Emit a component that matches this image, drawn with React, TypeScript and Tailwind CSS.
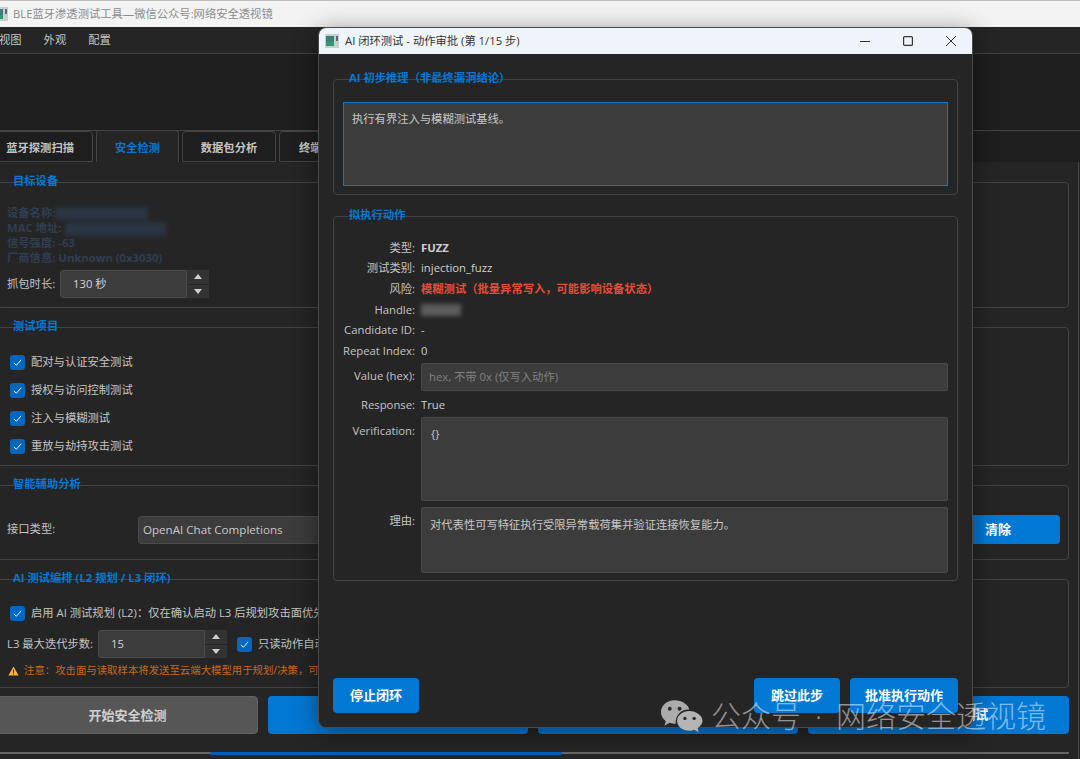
import type { ReactNode } from "react";

const FONT = "font-[family-name:'Open_Sans','Noto_Sans_CJK_SC',sans-serif]";

function AppIcon() {
  return (
    <svg viewBox="0 0 14 14" className="w-[14px] h-[14px] shrink-0" aria-hidden="true">
      <rect x="0" y="0" width="14" height="14" fill="#c9ced1" />
      <rect x="1" y="2" width="8" height="10" fill="#3b7f78" />
      <rect x="1" y="8" width="8" height="4" fill="#2f9a6d" />
      <rect x="11" y="2" width="2" height="5" fill="#5c6770" />
    </svg>
  );
}

function GroupBox({
  title,
  className,
  children,
}: {
  title: string;
  className: string;
  children: ReactNode;
}) {
  return (
    <section className={`relative shrink-0 rounded-[4px] border border-[#444444] ${className}`}>
      {/* Legend sits on the border, the line runs through it */}
      <div className="absolute left-[15px] top-[-12px] text-[11.3px] leading-[20px] font-bold text-[#0078d4] whitespace-nowrap">
        {title}
      </div>
      {children}
    </section>
  );
}

function Check({ label }: { label: string }) {
  return (
    <label className="flex items-center gap-[6px] whitespace-nowrap">
      <span className="flex h-[15px] w-[15px] shrink-0 items-center justify-center rounded-[3px] bg-[#0067c0]">
        <svg viewBox="0 0 12 12" className="h-[11px] w-[11px]" fill="none" stroke="#ffffff" strokeWidth="1">
          <path d="M2 6.5 L4.8 9 L10 3" />
        </svg>
      </span>
      <span className="text-[#c4c4c4]">{label}</span>
    </label>
  );
}

function Spin({ value, className }: { value: string; className: string }) {
  return (
    <div className={`flex h-[28px] shrink-0 ${className}`}>
      <div className="flex flex-1 items-center rounded-l-[3px] border border-[#4a4a4a] bg-[#3c3c3c] pl-[12px] pt-[1px] text-[#d4d4d4]">
        {value}
      </div>
      <div className="flex w-[22px] flex-col gap-px bg-[#252525]">
        <div className="flex flex-1 items-center justify-center bg-[#333333]">
          <span className="h-0 w-0 border-x-[4.5px] border-b-[5px] border-x-transparent border-b-[#d0d0d0]" />
        </div>
        <div className="flex flex-1 items-center justify-center bg-[#333333]">
          <span className="h-0 w-0 border-x-[4.5px] border-t-[5px] border-x-transparent border-t-[#d0d0d0]" />
        </div>
      </div>
    </div>
  );
}

function Row({
  label,
  children,
  className = "h-[20.6px] items-center",
}: {
  label: string;
  children: ReactNode;
  className?: string;
}) {
  return (
    <div className={`flex gap-[6px] ${className}`}>
      <div className="w-[81px] shrink-0 text-right text-[#c4c4c4] whitespace-nowrap">{label}</div>
      <div className="flex-1 text-[#d0d0d0] whitespace-nowrap">{children}</div>
    </div>
  );
}

function Background() {
  return (
    <div className="flex h-full flex-col">
      <div className="flex h-[27px] shrink-0 items-center gap-[5px] border-t border-[#bdbdbd] bg-[#f3f3f3] text-[11.3px] text-[#8c8c8c]">
        <div className="-ml-[6px]">
          <AppIcon />
        </div>
        <span className="whitespace-nowrap">BLE蓝牙渗透测试工具—微信公众号:网络安全透视镜</span>
      </div>

      <div className="flex h-[27px] shrink-0 items-center gap-[22px] border-b border-[#444444] bg-[#252525] text-[11.3px] text-[#c4c4c4]">
        <span className="-ml-[1px]">视图</span>
        <span>外观</span>
        <span>配置</span>
      </div>

      <div className="h-[76px] shrink-0 bg-[#1e1e1e]" />

      <div className="flex h-[32px] shrink-0 items-end gap-[3px] border-t border-[#444444] bg-[#1e1e1e] text-[11.3px] font-bold">
        <div className="-ml-[5px] flex h-[31px] w-[98px] items-center justify-end rounded-t-[4px] border border-[#444444] pr-[18px] pt-[3px] text-[#c4c4c4]">
          蓝牙探测扫描
        </div>
        <div className="flex h-[32px] w-[83px] items-center justify-center rounded-t-[4px] border border-b-0 border-[#444444] bg-[#252525] pt-[3px] text-[#0078d4]">
          安全检测
        </div>
        <div className="flex h-[31px] w-[94px] items-center justify-center rounded-t-[4px] border border-[#444444] pt-[3px] text-[#c4c4c4]">
          数据包分析
        </div>
        <div className="flex h-[31px] w-[94px] items-center rounded-t-[4px] border border-[#444444] pl-[19px] pt-[3px] text-[#c4c4c4]">
          终端
        </div>
      </div>

      <div className="-ml-[3px] flex w-[1082px] flex-1 flex-col gap-[19px] border-r border-[#444444] pr-[9px] pt-[20px] text-[11.3px]">
        <GroupBox title="目标设备" className="h-[126px] pl-[9px] pt-[22px]">
          <div className="relative font-bold leading-[15px] text-[#2f3f52]">
            <div>设备名称:</div>
            <div>MAC 地址:</div>
            <div>信号强度: -63</div>
            <div>厂商信息: Unknown (0x3030)</div>
            {/* Masked device name and address */}
            <div className="absolute left-[48px] top-[2px] h-[13px] w-[93px] bg-[#2b3543] blur-[2px]" />
            <div className="absolute left-[58px] top-[17px] h-[14px] w-[101px] bg-[#2b3543] blur-[2px]" />
          </div>
          <div className="mt-[5px] flex items-center">
            <span className="w-[53px] text-[#c4c4c4]">抓包时长:</span>
            <Spin value="130 秒" className="w-[149px]" />
          </div>
        </GroupBox>

        <GroupBox title="测试项目" className="h-[139px] pl-[12px] pt-[20px]">
          {["配对与认证安全测试", "授权与访问控制测试", "注入与模糊测试", "重放与劫持攻击测试"].map((item) => (
            <div key={item} className="flex h-[28px] items-center">
              <Check label={item} />
            </div>
          ))}
        </GroupBox>

        <GroupBox title="智能辅助分析" className="h-[75px] pl-[9px] pr-[8px] pt-[29px]">
          <div className="flex items-center">
            <span className="w-[131px] shrink-0 text-[#c4c4c4]">接口类型:</span>
            <div className="flex h-[28px] flex-1 items-center rounded-[3px] border border-[#4a4a4a] bg-[#3c3c3c] pl-[4px] pt-[1px] text-[11.6px] text-[#c8c8c8]">
              OpenAI Chat Completions
            </div>
            <button className="ml-[10px] h-[29px] w-[124px] rounded-[4px] bg-[#0078d4] pt-[1px] text-[13px] font-bold text-white">清除</button>
          </div>
        </GroupBox>

        <GroupBox title="AI 测试编排 (L2 规划 / L3 闭环)" className="h-[109px] pl-[9px] pt-[25px]">
          <div className="ml-[3px] flex h-[16px] items-center">
            <Check label="启用 AI 测试规划 (L2)：仅在确认启动 L3 后规划攻击面优先级" />
          </div>
          <div className="mt-[9px] flex h-[28px] items-center">
            <span className="w-[91px] shrink-0 text-[#c4c4c4]">L3 最大迭代步数:</span>
            <Spin value="15" className="w-[129px]" />
            <div className="ml-[10px]">
              <Check label="只读动作自动执行" />
            </div>
          </div>
          <div className="mt-[5px] flex h-[16px] items-center gap-[5px] whitespace-nowrap text-[10.4px] text-[#c8691a]">
            <svg viewBox="0 0 12 12" className="ml-[1px] h-[12px] w-[11px] shrink-0" aria-hidden="true">
              <path d="M6 1 L11.6 11 H0.4 Z" fill="#fbb040" />
              <rect x="5.4" y="4.5" width="1.2" height="3.6" fill="#5a3a10" />
              <rect x="5.4" y="8.8" width="1.2" height="1.2" fill="#5a3a10" />
            </svg>
            <span>注意：攻击面与读取样本将发送至云端大模型用于规划/决策，可能包含设备信息</span>
          </div>
        </GroupBox>

        <div className="-mt-[11px] flex h-[38px] shrink-0 gap-[10px] text-[13px] font-bold">
          <button className="w-[261px] rounded-[4px] border border-[#606060] bg-[#565656] pt-[1px] text-[#cfcfcf]">开始安全检测</button>
          <div className="w-[260px] rounded-[4px] bg-[#0078d4]" />
          <div className="w-[260px] rounded-[4px] bg-[#0078d4]" />
          <button className="flex-1 rounded-[4px] bg-[#0078d4] text-white">启动 L3 闭环测试</button>
        </div>

        <div className="-mt-[1px] h-[2px] shrink-0 bg-[#666666]">
          <div className="ml-[213px] h-[3px] w-[352px] rounded-[2px] bg-[#0060b8]" />
        </div>
      </div>
    </div>
  );
}

function Dialog() {
  return (
    <div className="absolute left-[318px] top-[27px] flex h-[701px] w-[655px] flex-col overflow-hidden rounded-[8px] border border-[#4a4a4a] bg-[#252525] text-[11.3px] shadow-[0_4px_24px_rgba(0,0,0,0.45)]">
      <div className="flex h-[26px] shrink-0 items-center bg-[#eff3fa] pl-[6px] text-[11.3px] text-[#333333]">
        <AppIcon />
        <span className="ml-[6px] whitespace-nowrap">AI 闭环测试 - 动作审批 (第 1/15 步)</span>
        <div className="ml-auto flex items-center gap-[33px] pr-[16px]">
          <svg viewBox="0 0 10 10" className="h-[10px] w-[10px]" stroke="#333333" strokeWidth="1" aria-hidden="true">
            <path d="M0 5.5 H10" />
          </svg>
          <svg viewBox="0 0 10 10" className="h-[10px] w-[10px]" fill="none" stroke="#333333" strokeWidth="1.2" aria-hidden="true">
            <rect x="0.6" y="0.6" width="8.8" height="8.8" rx="1" />
          </svg>
          <svg viewBox="0 0 10 10" className="h-[10px] w-[10px]" stroke="#333333" strokeWidth="1" aria-hidden="true">
            <path d="M0 0 L10 10 M10 0 L0 10" />
          </svg>
        </div>
      </div>

      <div className="flex flex-1 flex-col px-[14px] pb-[14px] pt-[25px]">
        <GroupBox title="AI 初步推理（非最终漏洞结论）" className="h-[116px] px-[9px] pt-[22px]">
          <div className="h-[84px] border border-[#0078d4] bg-[#3c3c3c] pl-[8px] pt-[8px] leading-[16px] text-[#c8c8c8]">
            执行有界注入与模糊测试基线。
          </div>
        </GroupBox>

        <GroupBox title="拟执行动作" className="mt-[21px] h-[365px] pr-[9px] pt-[21px]">
          <Row label="类型:">
            <span className="font-bold">FUZZ</span>
          </Row>
          <Row label="测试类别:">injection_fuzz</Row>
          <Row label="风险:">
            <span className="font-bold text-[#e74c3c]">模糊测试（批量异常写入，可能影响设备状态）</span>
          </Row>
          <Row label="Handle:">
            <div className="h-[12px] w-[40px] bg-[#5c5c5c] blur-[2px]" />
          </Row>
          <Row label="Candidate ID:">-</Row>
          <Row label="Repeat Index:">0</Row>
          <Row label="Value (hex):" className="mt-[1px] h-[28px] items-center">
            <input
              readOnly
              placeholder="hex, 不带 0x (仅写入动作)"
              className="h-[28px] w-full rounded-[2px] border border-[#4a4a4a] bg-[#3c3c3c] pl-[7px] outline-none placeholder:text-[#808080]"
            />
          </Row>
          <Row label="Response:" className="h-[26px] items-center pt-[3px]">True</Row>
          <Row label="Verification:" className="leading-[28px]">
            <div className="h-[84px] rounded-[2px] border border-[#4a4a4a] bg-[#3c3c3c] pl-[9px] pt-[2px] text-[#c8c8c8]">{"{}"}</div>
          </Row>
          <Row label="理由:" className="mt-[6px] leading-[28px]">
            <div className="h-[66px] rounded-[2px] border border-[#4a4a4a] bg-[#3c3c3c] pl-[8px] pt-[3px] text-[#c8c8c8]">
              对代表性可写特征执行受限异常载荷集并验证连接恢复能力。
            </div>
          </Row>
        </GroupBox>

        <div className="mt-auto flex h-[35px] gap-[10px] text-[13px] font-bold text-white">
          <button className="w-[86px] rounded-[4px] bg-[#0078d4] pt-[1px]">停止闭环</button>
          <button className="ml-auto w-[86px] rounded-[4px] bg-[#0078d4] pt-[1px]">跳过此步</button>
          <button className="w-[108px] rounded-[4px] bg-[#0078d4] pt-[1px]">批准执行动作</button>
        </div>
      </div>
    </div>
  );
}

function Watermark() {
  return (
    <div className="pointer-events-none absolute left-[660px] top-[697px] flex h-[38px] items-center gap-[8px] whitespace-nowrap text-[30px] font-light leading-none text-[#ffffff80]">
      <svg viewBox="0 0 44 34" className="h-[34px] w-[43px] shrink-0" aria-hidden="true">
        <path d="M15 1 C7 1 1 6.5 1 13 C1 17 3 20 6 22.5 L4.5 27 L10 24 C12 25 14 25 16 25 C15.5 16 22 10 30 10.5 C28.5 5 22.5 1 15 1 Z" fill="#ababab" />
        <path d="M30 12 C23 12 17.5 16.7 17.5 22 C17.5 27.5 23 32 30 32 C32 32 33.5 31.6 35 31 L39.5 33.5 L38.5 29.3 C41.5 27.2 43.5 24.8 43.5 22 C43.5 16.7 37 12 30 12 Z" fill="#b4b4b4" />
        <circle cx="10" cy="9.5" r="2" fill="#2a2a2a" />
        <circle cx="20" cy="9.5" r="2" fill="#2a2a2a" />
        <circle cx="25.5" cy="19.5" r="1.7" fill="#2a2a2a" />
        <circle cx="35" cy="19.5" r="1.7" fill="#2a2a2a" />
      </svg>
      <span className="flex">
        公众号
        <span className="w-[35px] text-center">·</span>
        网络安全透视镜
      </span>
    </div>
  );
}

export default function App() {
  return (
    <div className={`relative h-[759px] w-[1080px] overflow-hidden bg-[#252525] ${FONT}`}>
      <Background />
      <Dialog />
      <Watermark />
    </div>
  );
}
